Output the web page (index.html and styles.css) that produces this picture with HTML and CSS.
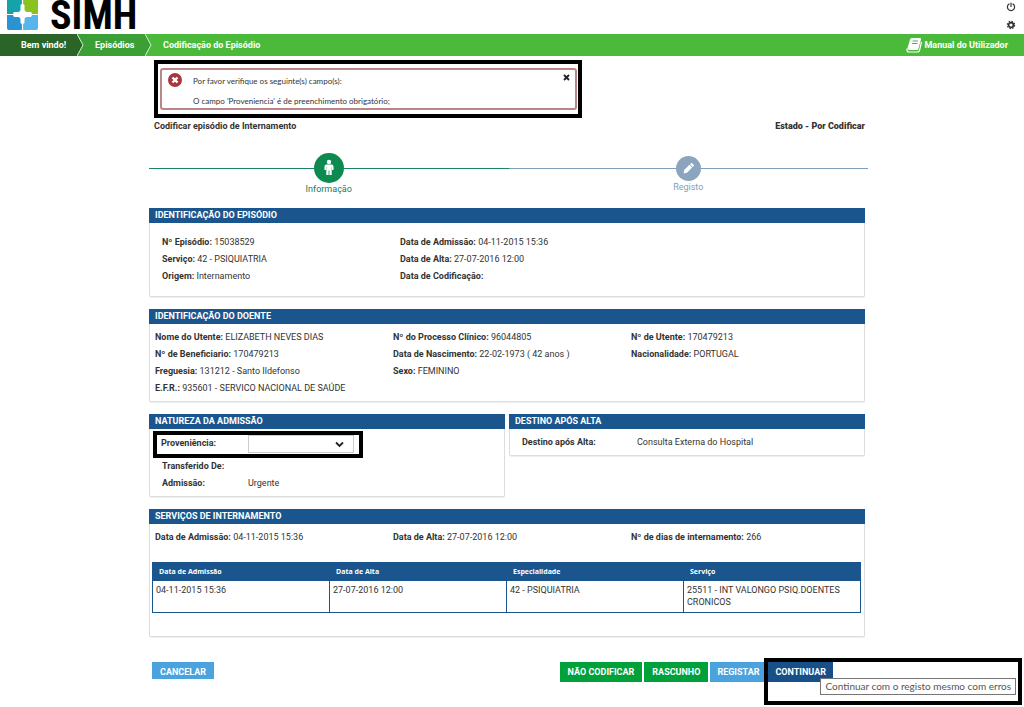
FILE: index.html
```html
<!DOCTYPE html>
<html lang="pt">
<head>
<meta charset="utf-8">
<meta name="viewport" content="width=device-width, initial-scale=1">
<title>SIMH - Codificação do Episódio</title>
<link rel="stylesheet" href="styles.css">
</head>
<body>
<header class="top">
  <a class="brand" href="#">
    <svg class="brand-mark" width="31" height="32" viewBox="0 0 31 32" aria-hidden="true">
      <path d="M0 0H15V15H0Z" fill="#14a3a8"/>
      <path d="M16 0H31V15H16Z" fill="#8cc21f"/>
      <path d="M0 16H15V31H2Q0 31 0 29Z" fill="#2a93d1"/>
      <path d="M16 16H31V29Q31 31 29 31H16Z" fill="#55b5ec"/>
      <path d="M15.500 0V31M0 15.500H31" stroke="#fff" stroke-width="1.200"/>
      <path d="M13.500 6Q15.500 4 17.500 6V11Q18 13 20 13H24Q26 15.500 24 18H20Q18 18 17.500 20V24Q15.500 26 13.500 24V20Q13 18 11 18H7Q5 15.500 7 13H11Q13 13 13.500 11Z" fill="#fff"/>
    </svg>
    <span class="brand-name">SIMH</span>
  </a>
  <div class="tools">
    <button class="tool" type="button" aria-label="Sair">
      <svg width="10" height="10" viewBox="0 0 10 10" fill="none" stroke="#333" stroke-width="1.200" stroke-linecap="round"><path d="M3 2A3.600 3.600 0 1 0 7 2M5 1V4.500"/></svg>
    </button>
    <button class="tool" type="button" aria-label="Definições">
      <svg width="10" height="10" viewBox="0 0 10 10" fill="none" stroke="#333"><circle cx="5" cy="5" r="2.400" stroke-width="1.700"/><circle cx="5" cy="5" r="3.600" stroke-width="1.300" stroke-dasharray="1.500 1.327"/></svg>
    </button>
  </div>
</header>

<nav class="crumbs">
  <a class="crumb crumb-home" href="#">Bem vindo!</a>
  <svg class="crumb-arrow" width="8" height="22" viewBox="0 0 8 22" aria-hidden="true"><rect width="8" height="22" fill="#3c9f35"/><path d="M0 0L6 11L0 22Z" fill="#2a6426"/><path d="M0 0L6 11L0 22" fill="none" stroke="#d5efd2"/></svg>
  <a class="crumb crumb-list" href="#">Episódios</a>
  <svg class="crumb-arrow" width="8" height="22" viewBox="0 0 8 22" aria-hidden="true"><path d="M0 0L6 11L0 22Z" fill="#3c9f35"/><path d="M0 0L6 11L0 22" fill="none" stroke="#d5efd2"/></svg>
  <a class="crumb crumb-current" href="#">Codificação do Episódio</a>
  <a class="manual" href="#">
    <svg width="16" height="16" viewBox="0 0 16 16" aria-hidden="true"><path d="M5.500 1H14Q15.500 1 15 2.500L12 13H3Q1 13 1.500 11L4 2.500Q4.500 1 5.500 1Z" fill="#fff"/><path d="M6.500 4H12M6 6.500H11.500" stroke="#4bba3a" stroke-width="1.200"/><path d="M1 11.500Q.5 15 3 15H11.500Q13 15 13.500 13.500L15.500 5" fill="none" stroke="#fff" stroke-width="1.200"/></svg>
    Manual do Utilizador
  </a>
</nav>

<main class="page">
  <div class="alert-frame">
    <div class="alert" role="alert">
      <svg class="alert-icon" width="14" height="14" viewBox="0 0 14 14" aria-hidden="true"><circle cx="7" cy="7" r="7" fill="#a8383d"/><path d="M4.500 4.500L9.500 9.500M9.500 4.500L4.500 9.500" stroke="#fff" stroke-width="2.400"/></svg>
      <div class="alert-text">
        <p>Por favor verifique os seguinte(s) campo(s):</p>
        <p>O campo 'Proveniencia' é de preenchimento obrigatório;</p>
      </div>
      <button class="alert-close" type="button" aria-label="Fechar">
        <svg width="7" height="7" viewBox="0 0 7 7"><path d="M1 1L6 6M6 1L1 6" stroke="#1b2127" stroke-width="1.800"/></svg>
      </button>
    </div>
  </div>

  <div class="status">
    <h1>Codificar episódio de Internamento</h1>
    <strong>Estado - Por Codificar</strong>
  </div>

  <ol class="steps">
    <li class="step step-active">
      <span class="step-dot"><svg width="12" height="18" viewBox="0 0 12 18" fill="#fff" aria-hidden="true"><circle cx="6" cy="3" r="2.200"/><path d="M3.500 5.500H8.500Q10.500 5.500 10.500 7.500V11H9V8H8.700V16H6.400V11.500H5.600V16H3.300V8H3V11H1.500V7.500Q1.500 5.500 3.500 5.500Z"/></svg></span>
      <span>Informação</span>
    </li>
    <li class="step">
      <span class="step-dot"><svg width="13" height="13" viewBox="0 0 13 13" fill="#fff" aria-hidden="true"><path d="M1.500 11.500L2.200 8L7.400 2.800L10.200 5.600L5 10.800Z"/><path d="M8 2.200L9 1.200Q9.500 .8 10 1.200L11.800 3Q12.200 3.500 11.800 4L10.800 5Z"/></svg></span>
      <span>Registo</span>
    </li>
  </ol>

  <section class="panel">
    <h2>IDENTIFICAÇÃO DO EPISÓDIO</h2>
    <div class="fields fields-episode">
      <div><p><b>Nº Episódio:</b> 15038529</p><p><b>Serviço:</b> 42 - PSIQUIATRIA</p><p><b>Origem:</b> Internamento</p></div>
      <div><p><b>Data de Admissão:</b> 04-11-2015 15:36</p><p><b>Data de Alta:</b> 27-07-2016 12:00</p><p><b>Data de Codificação:</b></p></div>
    </div>
  </section>

  <section class="panel">
    <h2>IDENTIFICAÇÃO DO DOENTE</h2>
    <div class="fields">
      <div><p><b>Nome do Utente:</b> ELIZABETH NEVES DIAS</p><p><b>Nº de Beneficiario:</b> 170479213</p><p><b>Freguesia:</b> 131212 - Santo Ildefonso</p><p><b>E.F.R.:</b> 935601 - SERVICO NACIONAL DE SAÚDE</p></div>
      <div><p><b>Nº do Processo Clínico:</b> 96044805</p><p><b>Data de Nascimento:</b> 22-02-1973 ( 42 anos )</p><p><b>Sexo:</b> FEMININO</p></div>
      <div><p><b>Nº de Utente:</b> 170479213</p><p><b>Nacionalidade:</b> PORTUGAL</p></div>
    </div>
  </section>

  <div class="pair">
    <section class="panel">
      <h2>NATUREZA DA ADMISSÃO</h2>
      <div class="origin">
        <label for="prov">Proveniência:</label>
        <span class="select"><select id="prov"><option></option></select>
          <svg width="9" height="7" viewBox="0 0 9 7" aria-hidden="true"><path d="M1 1.500L4.500 5L8 1.500" fill="none" stroke="#222" stroke-width="1.800"/></svg></span>
      </div>
      <dl class="list">
        <dt>Transferido De:</dt><dd></dd>
        <dt>Admissão:</dt><dd>Urgente</dd>
      </dl>
    </section>
    <section class="panel">
      <h2>DESTINO APÓS ALTA</h2>
      <dl class="list list-dest">
        <dt>Destino após Alta:</dt><dd>Consulta Externa do Hospital</dd>
      </dl>
    </section>
  </div>

  <section class="panel">
    <h2>SERVIÇOS DE INTERNAMENTO</h2>
    <div class="fields">
      <p><b>Data de Admissão:</b> 04-11-2015 15:36</p>
      <p><b>Data de Alta:</b> 27-07-2016 12:00</p>
      <p><b>Nº de dias de internamento:</b> 266</p>
    </div>
    <table class="stays">
      <thead><tr><th>Data de Admissão</th><th>Data de Alta</th><th>Especialidade</th><th>Serviço</th></tr></thead>
      <tbody><tr><td>04-11-2015 15:36</td><td>27-07-2016 12:00</td><td>42 - PSIQUIATRIA</td><td>25511 - INT VALONGO PSIQ.DOENTES CRONICOS</td></tr></tbody>
    </table>
  </section>

  <div class="actions">
    <button class="btn btn-light btn-cancel" type="button">CANCELAR</button>
    <button class="btn btn-green" type="button">NÃO CODIFICAR</button>
    <button class="btn btn-green" type="button">RASCUNHO</button>
    <button class="btn btn-light" type="button">REGISTAR</button>
    <div class="continue">
      <button class="btn btn-dark" type="button" aria-describedby="tip">CONTINUAR</button>
      <span class="highlight"></span>
      <span class="tooltip" id="tip" role="tooltip">Continuar com o registo mesmo com erros</span>
    </div>
  </div>
</main>
</body>
</html>
```
FILE: styles.css
```css
* { box-sizing: border-box; }
body {
  margin: 0;
  background: #fff;
  color: #333;
  font: 9px/17px Roboto, "Liberation Sans", Arial, sans-serif;
}
h1, h2, p, dl, dd, ol { margin: 0; padding: 0; }
a { color: inherit; text-decoration: none; }
button, select { font: inherit; color: inherit; margin: 0; }
svg { display: block; flex: none; }

.top {
  display: flex;
  justify-content: space-between;
  height: 34px;
  padding: 0 8px 0 7px;
}
.brand { display: flex; gap: 12px; }
.brand-mark { margin-top: -1px; }
.brand-name {
  color: #000;
  font: bold 40px/32px "Roboto Condensed", Roboto, "Liberation Sans", sans-serif;
}
.tools { display: flex; flex-direction: column; gap: 8px; padding-top: 2px; }
.tool { padding: 0; border: 0; background: none; }

.crumbs {
  display: flex;
  align-items: center;
  height: 22px;
  background: #4bba3a;
  color: #fff;
  font-weight: bold;
  line-height: 22px;
}
.crumb-home { width: 77px; padding-left: 21px; background: #2a6426; }
.crumb-list { width: 60px; padding-left: 10px; background: #3c9f35; }
.crumb-current { padding-left: 10px; }
.manual { display: flex; align-items: center; gap: 2px; margin-left: auto; padding-right: 16px; }

.page { padding: 4px 159px 25px 149px; }

.alert-frame {
  width: 428px;
  margin-left: 5px;
  padding: 4px 1px 4px 2px;
  border: 4px solid #000;
}
.alert {
  display: flex;
  align-items: flex-start;
  height: 42px;
  padding: 1px 5px 0 6px;
  border: 2px solid #b98586;
  border-radius: 3px;
  line-height: 20px;
}
.alert-icon { margin-top: 2px; }
.alert-text { flex: 1; margin-left: 11px; font-family: Lato, "Liberation Sans", sans-serif; font-size: 8px; }
.alert-close { padding: 3px 0 0; border: 0; background: none; }

.status {
  display: flex;
  justify-content: space-between;
  padding: 0 0 0 5px;
  font-weight: bold;
}
h1 { font-size: 9px; }

.steps {
  display: flex;
  height: 73px;
  margin-right: -3px;
  padding-top: 18px;
  list-style: none;
  color: #7f9fba;
}
.step {
  flex: 1;
  display: flex;
  flex-direction: column;
  align-items: center;
  background: linear-gradient(#7f9fba, #7f9fba) 0 15px / 100% 1px no-repeat;
  line-height: 11px;
}
.step-dot {
  display: grid;
  place-items: center;
  width: 25px;
  height: 25px;
  margin: 3px 0 1px;
  border-radius: 50%;
  background: #8aa5bd;
}
.step-active {
  color: #177d5b;
  background-image: linear-gradient(#1a8560, #1a8560);
}
.step-active .step-dot { width: 30px; height: 30px; margin-top: 0; background: #0c8a4f; }

.panel {
  margin-bottom: 12px;
  border: 1px solid #ddd;
  border-top: 0;
  border-radius: 2px;
  box-shadow: 0 1px 1px #eee;
}
.panel h2 {
  margin: 0 -1px;
  padding: 0 6px;
  background: #1a568d;
  color: #fff;
  font-size: 9px;
  font-weight: bold;
  line-height: 15px;
}
.fields {
  display: grid;
  grid-template-columns: repeat(3, 1fr);
  padding: 5px 0 4px;
}
.fields > * { padding-left: 5px; }
.fields-episode { padding: 11px 0; }
.fields-episode > * { padding-left: 12px; }

.pair { display: grid; grid-template-columns: 1fr 1fr; gap: 4px; align-items: start; }
.origin {
  display: flex;
  width: 210px;
  height: 27px;
  margin: 2px 0 0 3px;
  padding-left: 4px;
  border: 4px solid #000;
  font-weight: bold;
}
.origin label { width: 87px; }
.select { position: relative; }
.select select {
  width: 106px;
  height: 18px;
  border: 1px solid #ccc;
  background: #fff;
  appearance: none;
}
.select svg { position: absolute; right: 10px; top: 6px; pointer-events: none; }
.list { display: grid; grid-template-columns: 86px 1fr; padding: 0 0 4px 12px; }
.list dt { font-weight: bold; }
.list-dest { grid-template-columns: 115px 1fr; padding: 5px 0 4px 12px; }

.stays {
  width: calc(100% - 5px);
  margin: 12px 3px 23px 2px;
  border-collapse: collapse;
  table-layout: fixed;
  line-height: 12px;
}
.stays th {
  height: 18px;
  padding: 0 6px;
  border: 1px solid #1a568d;
  border-left-color: #c5d5e4;
  background: #1a568d;
  color: #fff;
  font: bold 7px/12px "Open Sans", sans-serif;
  text-align: left;
}
.stays td { height: 32px; padding: 3px; border: 1px solid #1a568d; vertical-align: top; }
.stays th:first-child { border-left-color: #1a568d; }

.actions { display: flex; gap: 2px; align-items: flex-start; padding: 13px 32px 0 3px; }
.btn {
  height: 20px;
  padding: 0 7px;
  border: 0;
  color: #fff;
  font-weight: bold;
  line-height: 20px;
  white-space: nowrap;
}
.btn-light { background: #4aa3df; }
.btn-green { padding: 0 8px; background: #00a13a; }
.btn-dark { background: #174f86; }
.btn-cancel { height: 17px; margin-right: auto; padding: 0 8px; }
.continue { position: relative; }
.highlight {
  position: absolute;
  left: -4px;
  top: -4px;
  width: 258px;
  height: 47px;
  border: 4px solid #000;
  pointer-events: none;
}
.tooltip {
  position: absolute;
  left: 52px;
  top: 16px;
  padding: 0 4px;
  border: 1px solid #767676;
  background: #fff;
  color: #555;
  font: 10px/15px Lato, "Open Sans", sans-serif;
  white-space: nowrap;
}
```
